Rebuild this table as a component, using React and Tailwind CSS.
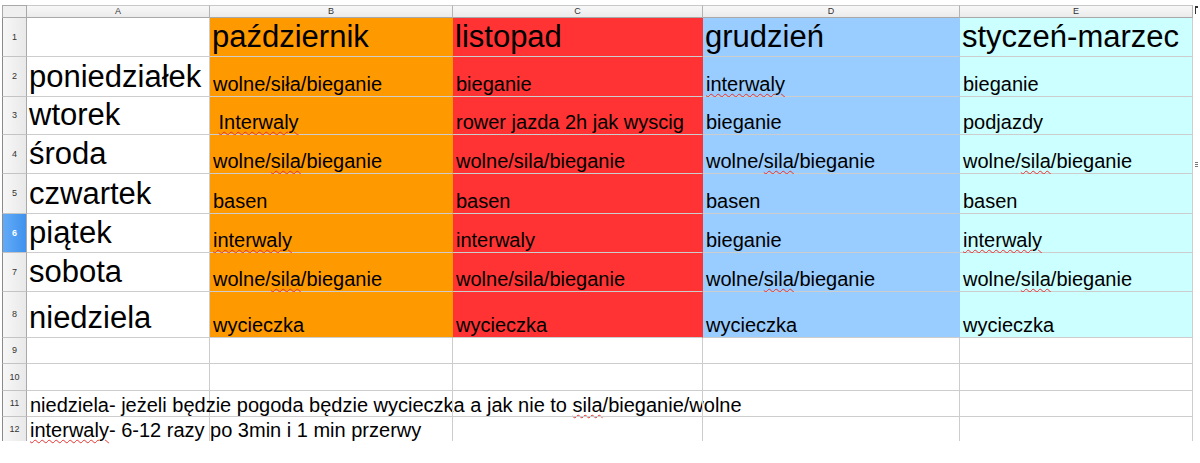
import React from "react";

const Sp = ({ children }) => (
  <span className="underline decoration-wavy decoration-[#e8312f] decoration-1 underline-offset-[2px]">
    {children}
  </span>
);

const W = (
  <>
    wolne/<Sp>sila</Sp>/bieganie
  </>
);

// column backgrounds; right border takes the fill colour so no vertical line shows
const colStyle = [
  "border-r-[#cdcdcd]",
  "bg-[#ff9900] border-r-[#ff9900]",
  "bg-[#ff3333] border-r-[#ff3333]",
  "bg-[#99ccff] border-r-[#99ccff]",
  "bg-[#ccffff] border-r-[#cdcdcd]",
];

const rows = [
  ["", "październik", "listopad", "grudzień", "styczeń-marzec"],
  ["poniedziałek", "wolne/siła/bieganie", "bieganie", <Sp>interwaly</Sp>, "bieganie"],
  [
    "wtorek",
    <>
      {"\u00a0"}
      <Sp>Interwaly</Sp>
    </>,
    "rower jazda 2h jak wyscig",
    "bieganie",
    "podjazdy",
  ],
  ["środa", W, "wolne/sila/bieganie", W, W],
  ["czwartek", "basen", "basen", "basen", "basen"],
  ["piątek", <Sp>interwaly</Sp>, "interwaly", "bieganie", <Sp>interwaly</Sp>],
  ["sobota", W, "wolne/sila/bieganie", W, W],
  ["niedziela", "wycieczka", "wycieczka", "wycieczka", "wycieczka"],
  ["", "", "", "", ""],
  ["", "", "", "", ""],
  [
    <>
      niedziela- jeżeli będzie pogoda będzie wycieczka a jak nie to{" "}
      <Sp>sila</Sp>/bieganie/wolne
    </>,
    "",
    "",
    "",
    "",
  ],
  [
    <>
      <Sp>interwaly</Sp>- 6-12 razy po 3min i 1 min przerwy
    </>,
    "",
    "",
    "",
    "",
  ],
];

export default function App() {
  return (
    <div className="flex h-[463px] w-[1200px] bg-white pt-[5px] pl-[2px] font-['Liberation_Sans',Arial,sans-serif] text-black">
      <div className="grid h-fit grid-cols-[25px_183px_243px_250px_257px_233px] grid-rows-[13px_39px_40px_38px_39px_40px_39px_39px_46px_26px_27px_26px_24px]">
        {/* column header */}
        <div className="border-t border-l border-r border-b border-[#a9a9a9] bg-[#efefef]" />
        {["A", "B", "C", "D", "E"].map((c) => (
          <div
            key={c}
            className="flex items-center justify-center border-t border-r border-b border-t-[#c8c8c8] border-r-[#b4b4b4] border-b-[#a9a9a9] bg-gradient-to-b from-[#f8f8f8] to-[#ebebeb] text-[9px] leading-none text-[#333]"
          >
            {c}
          </div>
        ))}

        {rows.map((cells, r) => {
          const last = r === rows.length - 1;
          const big = r <= 7;
          return (
            <React.Fragment key={r}>
              <div
                className={`flex items-center justify-center border-l border-r border-l-[#8a8a8a] border-r-[#a9a9a9] text-[9px] leading-none ${
                  last ? "" : "border-b border-b-[#c4c4c4]"
                } ${
                  r === 5
                    ? "bg-gradient-to-r from-[#63abf7] to-[#3f92ee] font-bold text-white"
                    : "bg-gradient-to-r from-[#f7f7f7] to-[#e9e9e9] text-[#333]"
                }`}
              >
                {r + 1}
              </div>
              {cells.map((content, c) => {
                const colored = r <= 7 && c > 0;
                const head = r === 0;
                const dayName = c === 0 && big;
                return (
                  <div
                    key={c}
                    className={`flex items-end whitespace-nowrap border-r ${
                      colored ? colStyle[c] : "border-r-[#cdcdcd]"
                    } ${last ? "" : "border-b border-b-[#cdcdcd]"} ${
                      head || dayName
                        ? "pl-[2px] pb-[4px] text-[31px] leading-none"
                        : r >= 10
                        ? "pl-[3px] pb-[1px] text-[20px] leading-none"
                        : "pl-[3px] pb-[2px] text-[20px] leading-none"
                    }`}
                  >
                    <span>{content}</span>
                  </div>
                );
              })}
            </React.Fragment>
          );
        })}
      </div>

      {/* split handles of the scrollbars */}
      <div className="flex w-[5px] flex-col items-end">
        <div className="mt-[1px] h-[8px] w-[3px] border-t-2 border-l border-[#333]" />
        <div className="mt-[148px] flex w-[3px] flex-col gap-[1px]">
          <div className="h-px bg-[#777]" />
          <div className="h-px bg-[#777]" />
          <div className="h-px bg-[#777]" />
        </div>
      </div>
    </div>
  );
}
